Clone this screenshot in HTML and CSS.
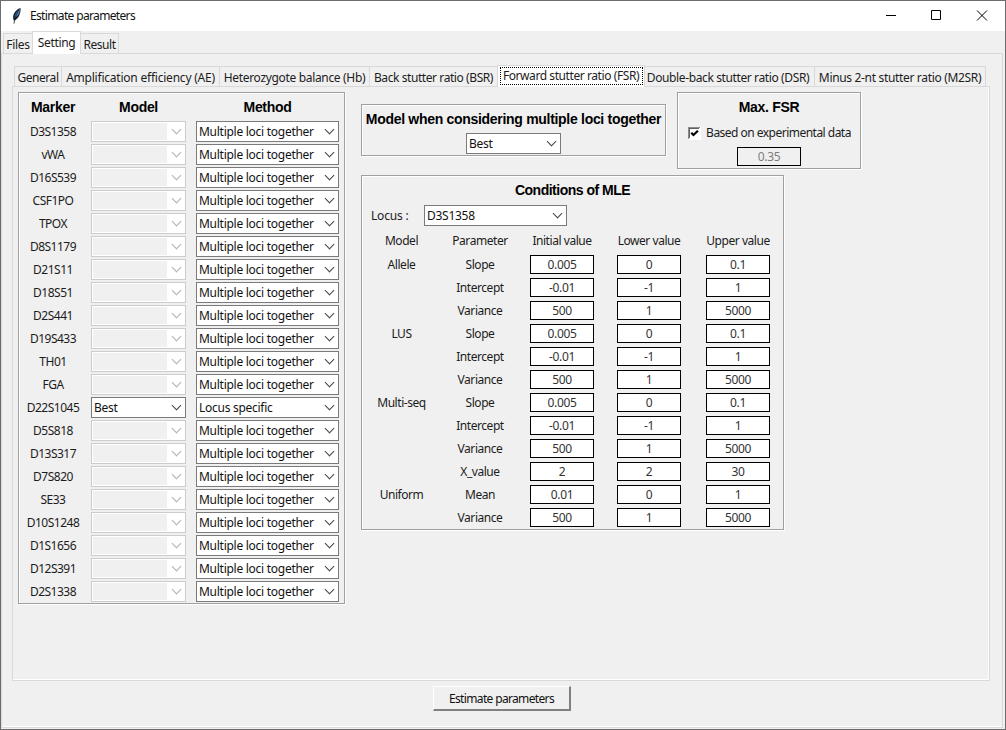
FILE: index.html
```
<!DOCTYPE html>
<html lang="en">
<head>
<meta charset="utf-8">
<title>Estimate parameters</title>
<link rel="stylesheet" href="styles.css">
</head>
<body>
<div class="window">
  <header class="titlebar">
    <svg class="feather" width="12" height="18" viewBox="0 0 12 18"><path d="M9.500 1C6 2 3 5 2.200 9c-.3 2 0 3.500.8 4.500C5.500 13 8 10 8.800 7 9.500 4.500 9.800 2.500 9.500 1z" fill="#17263a"/><path d="M8.800 2C6.500 4 4 7 3.700 11L7 8 8.500 5z" fill="#5d91c8"/><path d="M8 3C5.500 7 4 10 3 16.500" fill="none" stroke="#0b0f16" stroke-width=".8"/></svg>
    <span class="caption">Estimate parameters</span>
    <svg class="controls" width="120" height="30" viewBox="0 0 120 30" fill="none" stroke="#000"><path d="M4 14.500h10M49.500 9.500h9v9h-9zM95 9.500l10 10M105 9.500l-10 10"/></svg>
  </header>
  <nav class="tabs outer-tabs">
    <span class="tab t-files">Files</span><span class="tab t-setting active">Setting</span><span class="tab t-result">Result</span>
  </nav>
  <main class="outer-pane">
    <nav class="tabs inner-tabs">
      <span class="tab t-general">General</span><span class="tab t-ae">Amplification efficiency (AE)</span><span class="tab t-hb">Heterozygote balance (Hb)</span><span class="tab t-bsr">Back stutter ratio (BSR)</span><span class="tab t-fsr active"><span class="focus">Forward stutter ratio (FSR)</span></span><span class="tab t-dsr">Double-back stutter ratio (DSR)</span><span class="tab t-m2sr">Minus 2-nt stutter ratio (M2SR)</span>
    </nav>
    <section class="inner-pane">
      <div class="frame markers">
        <b>Marker</b><b>Model</b><b>Method</b>
        <span>D3S1358</span><div class="combo off"></div><div class="combo">Multiple loci together</div>
        <span>vWA</span><div class="combo off"></div><div class="combo">Multiple loci together</div>
        <span>D16S539</span><div class="combo off"></div><div class="combo">Multiple loci together</div>
        <span>CSF1PO</span><div class="combo off"></div><div class="combo">Multiple loci together</div>
        <span>TPOX</span><div class="combo off"></div><div class="combo">Multiple loci together</div>
        <span>D8S1179</span><div class="combo off"></div><div class="combo">Multiple loci together</div>
        <span>D21S11</span><div class="combo off"></div><div class="combo">Multiple loci together</div>
        <span>D18S51</span><div class="combo off"></div><div class="combo">Multiple loci together</div>
        <span>D2S441</span><div class="combo off"></div><div class="combo">Multiple loci together</div>
        <span>D19S433</span><div class="combo off"></div><div class="combo">Multiple loci together</div>
        <span>TH01</span><div class="combo off"></div><div class="combo">Multiple loci together</div>
        <span>FGA</span><div class="combo off"></div><div class="combo">Multiple loci together</div>
        <span>D22S1045</span><div class="combo">Best</div><div class="combo">Locus specific</div>
        <span>D5S818</span><div class="combo off"></div><div class="combo">Multiple loci together</div>
        <span>D13S317</span><div class="combo off"></div><div class="combo">Multiple loci together</div>
        <span>D7S820</span><div class="combo off"></div><div class="combo">Multiple loci together</div>
        <span>SE33</span><div class="combo off"></div><div class="combo">Multiple loci together</div>
        <span>D10S1248</span><div class="combo off"></div><div class="combo">Multiple loci together</div>
        <span>D1S1656</span><div class="combo off"></div><div class="combo">Multiple loci together</div>
        <span>D12S391</span><div class="combo off"></div><div class="combo">Multiple loci together</div>
        <span>D2S1338</span><div class="combo off"></div><div class="combo">Multiple loci together</div>
      </div>
      <div class="side">
        <div class="top-row">
          <div class="frame shared-model"><b>Model when considering multiple loci together</b><div class="combo">Best</div></div>
          <div class="frame max-fsr"><b>Max. FSR</b>
            <label class="check"><svg class="box" width="13" height="13" viewBox="0 0 13 13"><path d="M0 0h13v13H0z" fill="#fff"/><path d="M0 .5h12M.5 0v12" fill="none" stroke="#8c8c8c"/><path d="M1 1.500h10M1.500 1v10" fill="none" stroke="#606060"/><path d="M3.300 5.700l2.200 2.300 4.400-4.300" fill="none" stroke="#000" stroke-width="2.200"/></svg>Based on experimental data</label>
            <div class="entry disabled">0.35</div>
          </div>
        </div>
        <div class="frame mle">
          <b>Conditions of MLE</b>
          <div class="locus"><span>Locus :</span><div class="combo">D3S1358</div></div>
          <div class="params">
            <span>Model</span><span>Parameter</span><span>Initial value</span><span>Lower value</span><span>Upper value</span>
            <span>Allele</span><span>Slope</span><div class="entry">0.005</div><div class="entry">0</div><div class="entry">0.1</div>
            <span></span><span>Intercept</span><div class="entry">-0.01</div><div class="entry">-1</div><div class="entry">1</div>
            <span></span><span>Variance</span><div class="entry">500</div><div class="entry">1</div><div class="entry">5000</div>
            <span>LUS</span><span>Slope</span><div class="entry">0.005</div><div class="entry">0</div><div class="entry">0.1</div>
            <span></span><span>Intercept</span><div class="entry">-0.01</div><div class="entry">-1</div><div class="entry">1</div>
            <span></span><span>Variance</span><div class="entry">500</div><div class="entry">1</div><div class="entry">5000</div>
            <span>Multi-seq</span><span>Slope</span><div class="entry">0.005</div><div class="entry">0</div><div class="entry">0.1</div>
            <span></span><span>Intercept</span><div class="entry">-0.01</div><div class="entry">-1</div><div class="entry">1</div>
            <span></span><span>Variance</span><div class="entry">500</div><div class="entry">1</div><div class="entry">5000</div>
            <span></span><span>X_value</span><div class="entry">2</div><div class="entry">2</div><div class="entry">30</div>
            <span>Uniform</span><span>Mean</span><div class="entry">0.01</div><div class="entry">0</div><div class="entry">1</div>
            <span></span><span>Variance</span><div class="entry">500</div><div class="entry">1</div><div class="entry">5000</div>
          </div>
        </div>
      </div>
    </section>
    <button class="run">Estimate parameters</button>
  </main>
</div>
</body>
</html>
```
FILE: styles.css
```
* { box-sizing: border-box; }
body { margin: 0; overflow: hidden; }
.window {
  width: 1006px; height: 730px; border: 1px solid #6e6c6d; background: #f0f0f0;
  display: flex; flex-direction: column;
  font: 12px/16px "Noto Sans", "Open Sans", sans-serif; letter-spacing: -0.33px; color: #1c1c1c;
  white-space: nowrap;
}
.titlebar { height: 30px; background: #fff; display: flex; align-items: center; flex: none; }
.feather { margin-left: 10px; }
.caption { margin-left: 7px; flex: 1; color: #111; letter-spacing: -0.65px; }
.controls { margin-right: 3px; }
.tabs { display: flex; align-items: flex-end; flex: none; }
.tab {
  border: 1px solid #d9d9d9; border-bottom: 0; border-left-width: 0; height: 20px;
  display: flex; align-items: center; justify-content: center; padding-top: 2px;
}
.tab:first-child { border-left-width: 1px; }
.tab.active { background: #fff; height: 22px; border-left-width: 1px; margin-left: -1px; margin-bottom: -1px; position: relative; padding: 0 0 1px; }
.outer-tabs { height: 22px; padding-left: 2px; }
.t-files { width: 30px; }
.outer-tabs .active { width: 49px; height: 23px; }
.t-result { width: 38px; letter-spacing: -0.45px; }
.outer-pane {
  flex: 1; margin: 0 2px 1px 0; border: 1px solid #d9d9d9; padding: 11px 12px 0 10px;
  box-shadow: inset 0 -1px #fff; display: flex; flex-direction: column;
}
.inner-tabs { height: 21px; padding-left: 2px; }
.t-general { width: 48px; letter-spacing: -0.45px; }
.t-ae { width: 158px; letter-spacing: -0.22px; }
.t-hb { width: 150px; }
.t-bsr { width: 128px; letter-spacing: -0.42px; }
.inner-tabs .t-fsr { width: 148px; padding: 0 0 2px; letter-spacing: -0.42px; }
.focus { border: 1px dotted #000; height: 18px; line-height: 16px; width: 143px; text-align: center; }
.t-dsr { width: 170px; letter-spacing: -0.38px; padding-right: 3px; }
.t-m2sr { width: 171px; }
.inner-pane {
  height: 595px; border: 1px solid #d9d9d9; box-shadow: inset 0 -1px #fff, inset -1px 0 #fff;
  padding: 5px; display: flex; align-items: flex-start;
}
.frame { border: 1px solid #a0a0a0; box-shadow: 1px 1px #fff, inset 1px 1px #fff; }
b { font: bold 14px/16px "Liberation Sans", Arial, sans-serif; letter-spacing: -0.3px; color: #000; text-align: center; }
.markers {
  width: 327px; height: 512px; padding-left: 3px;
  display: grid; grid-template-columns: 62px 109px 149px; grid-template-rows: 27px;
  grid-auto-rows: 23px; align-items: center; justify-items: center; text-align: center;
}
.markers b { padding-top: 1px; }
.markers span { letter-spacing: -0.5px; }
.combo {
  width: 143px; height: 21px; border: 1px solid #7a7a7a; background: #fff;
  padding-left: 2px; line-height: 18px; text-align: left; color: #111; letter-spacing: -0.27px;
  display: flex; justify-content: space-between; align-items: center;
}
.combo::after {
  content: ""; width: 6px; height: 6px; border: solid #444; border-width: 0 1px 1px 0;
  transform: rotate(45deg); margin: -4px 5px 0 auto;
}
.markers .combo:nth-child(3n+2), .shared-model .combo { width: 95px; }
.combo.off { border-color: #ccc; background: linear-gradient(#f0f0f0, #f0f0f0) 1px 1px / 74px 17px no-repeat #fff; }
.combo.off::after { border-color: #b0b0b0; }
.side { margin-left: 16px; }
.top-row { display: flex; align-items: flex-start; height: 83px; }
.shared-model {
  margin-top: 12px; width: 305px; height: 52px; padding-top: 6px;
  display: flex; flex-direction: column; align-items: center; gap: 6px;
}
.max-fsr {
  margin-left: 11px; width: 184px; height: 77px; padding-top: 6px;
  display: flex; flex-direction: column; align-items: center;
}
.check { display: flex; align-items: center; gap: 5px; margin-top: 10px; height: 16px; letter-spacing: -0.52px; padding-left: 1px; }
.entry {
  width: 64px; height: 19px; border: 1px solid #000; background: #fff;
  text-align: center; line-height: 18px; color: #333;
}
.max-fsr .entry { margin-top: 6px; }
.entry.disabled { background: #f0f0f0; color: #7d7d7d; }
.mle { width: 423px; height: 355px; padding-top: 6px; display: flex; flex-direction: column; }
.mle b { letter-spacing: -0.5px; }
.locus { display: flex; align-items: center; padding-left: 9px; margin-top: 7px; }
.locus span { width: 53px; letter-spacing: -0.2px; }
.params {
  display: grid; grid-template-columns: 79px 78px 86px 88px 90px; grid-template-rows: 27px;
  grid-auto-rows: 23px; align-items: center; justify-items: center;
}
.params span { letter-spacing: -0.45px; }
.params span:nth-child(-n+5) { padding-top: 2px; }
.run {
  width: 138px; height: 25px; margin: 5px auto 0; translate: 1px 0;
  border: solid; border-width: 1px 2px 2px 1px; border-color: #fff #808080 #808080 #fff;
  background: #f0f0f0; font: inherit; letter-spacing: -0.65px; padding: 2px 0 0; color: #111;
}
```
